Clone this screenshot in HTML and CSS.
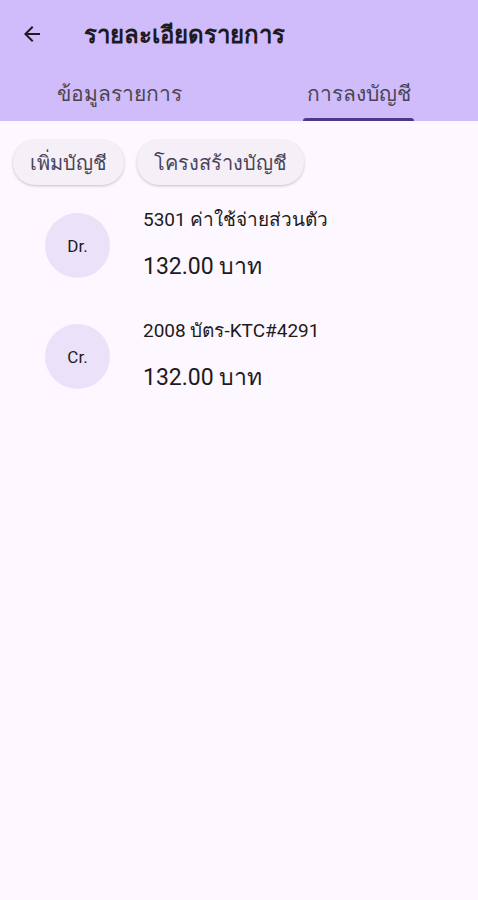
FILE: index.html
```html
<!DOCTYPE html>
<html lang="th">
<head>
    <meta charset="utf-8">
    <title>รายละเอียดรายการ</title>
    <link rel="stylesheet" href="styles.css">
</head>
<body>

<div class="header">
    <div class="toolbar">
        <span class="back">
            <svg width="24" height="24" viewBox="0 0 24 24">
                <path d="M20 11H7.83l5.59-5.59L12 4l-8 8 8 8 1.41-1.41L7.83 13H20v-2z" fill="#1d1b20"/>
            </svg>
        </span>
        <h1 class="title">รายละเอียดรายการ</h1>
    </div>
    <div class="tabs">
        <div class="tab">ข้อมูลรายการ</div>
        <div class="tab active"><span>การลงบัญชี</span></div>
    </div>
</div>

<div class="chips">
    <button class="chip">เพิ่มบัญชี</button>
    <button class="chip">โครงสร้างบัญชี</button>
</div>

<div class="entries">
    <div class="entry">
        <div class="badge">Dr.</div>
        <div class="info">
            <div class="account">5301 ค่าใช้จ่ายส่วนตัว</div>
            <div class="amount">132.00 บาท</div>
        </div>
    </div>
    <div class="entry">
        <div class="badge">Cr.</div>
        <div class="info">
            <div class="account">2008 บัตร-KTC#4291</div>
            <div class="amount">132.00 บาท</div>
        </div>
    </div>
</div>

</body>
</html>
```

FILE: styles.css
```css
body, html {
    margin: 0;
    padding: 0;
    height: 100%;
    background: #fdf7ff;
    color: #1d1b20;
    font-family: Roboto, "Noto Sans", "DejaVu Sans", sans-serif;
}

.header {
    background: #d0bcfa;
}

.toolbar {
    display: flex;
    align-items: center;
    height: 68px;
    padding: 0 20px;
}
.back {
    display: flex;
    width: 24px;
    height: 24px;
}
.title {
    margin: 0 0 0 40px;
    font-size: 24px;
    font-weight: bold;
    color: #1d1b20;
}

.tabs {
    display: flex;
    height: 53px;
}
.tab {
    flex: 1;
    display: flex;
    justify-content: center;
    align-items: center;
    padding-bottom: 2px;
    font-size: 21px;
    color: #49454f;
}
.tab.active {
    position: relative;
    color: #4a4459;
}
.tab.active::after {
    content: "";
    position: absolute;
    left: 64px;
    right: 64px;
    bottom: 0;
    height: 3px;
    border-radius: 3px 3px 0 0;
    background: #4f378b;
}

.chips {
    display: flex;
    gap: 13px;
    padding: 19px 13px 0;
}
.chip {
    height: 45px;
    padding: 0 17px;
    border: none;
    border-radius: 22px;
    background: #f5eff8;
    box-shadow: 0 1px 3px rgba(0, 0, 0, 0.22);
    font-family: inherit;
    font-size: 20px;
    color: #4a4459;
}

.entries {
    padding-top: 15px;
}
.entry {
    display: flex;
    height: 111px;
}
.badge {
    width: 65px;
    height: 65px;
    margin: 13px 33px 0 45px;
    border-radius: 50%;
    background: #ebe2fa;
    display: flex;
    justify-content: center;
    align-items: center;
    font-size: 17px;
    color: #1d1b20;
}
.info {
    padding-top: 5px;
}
.account {
    font-size: 19px;
    line-height: 30px;
}
.amount {
    margin-top: 17px;
    font-size: 23px;
    line-height: 30px;
}
```
